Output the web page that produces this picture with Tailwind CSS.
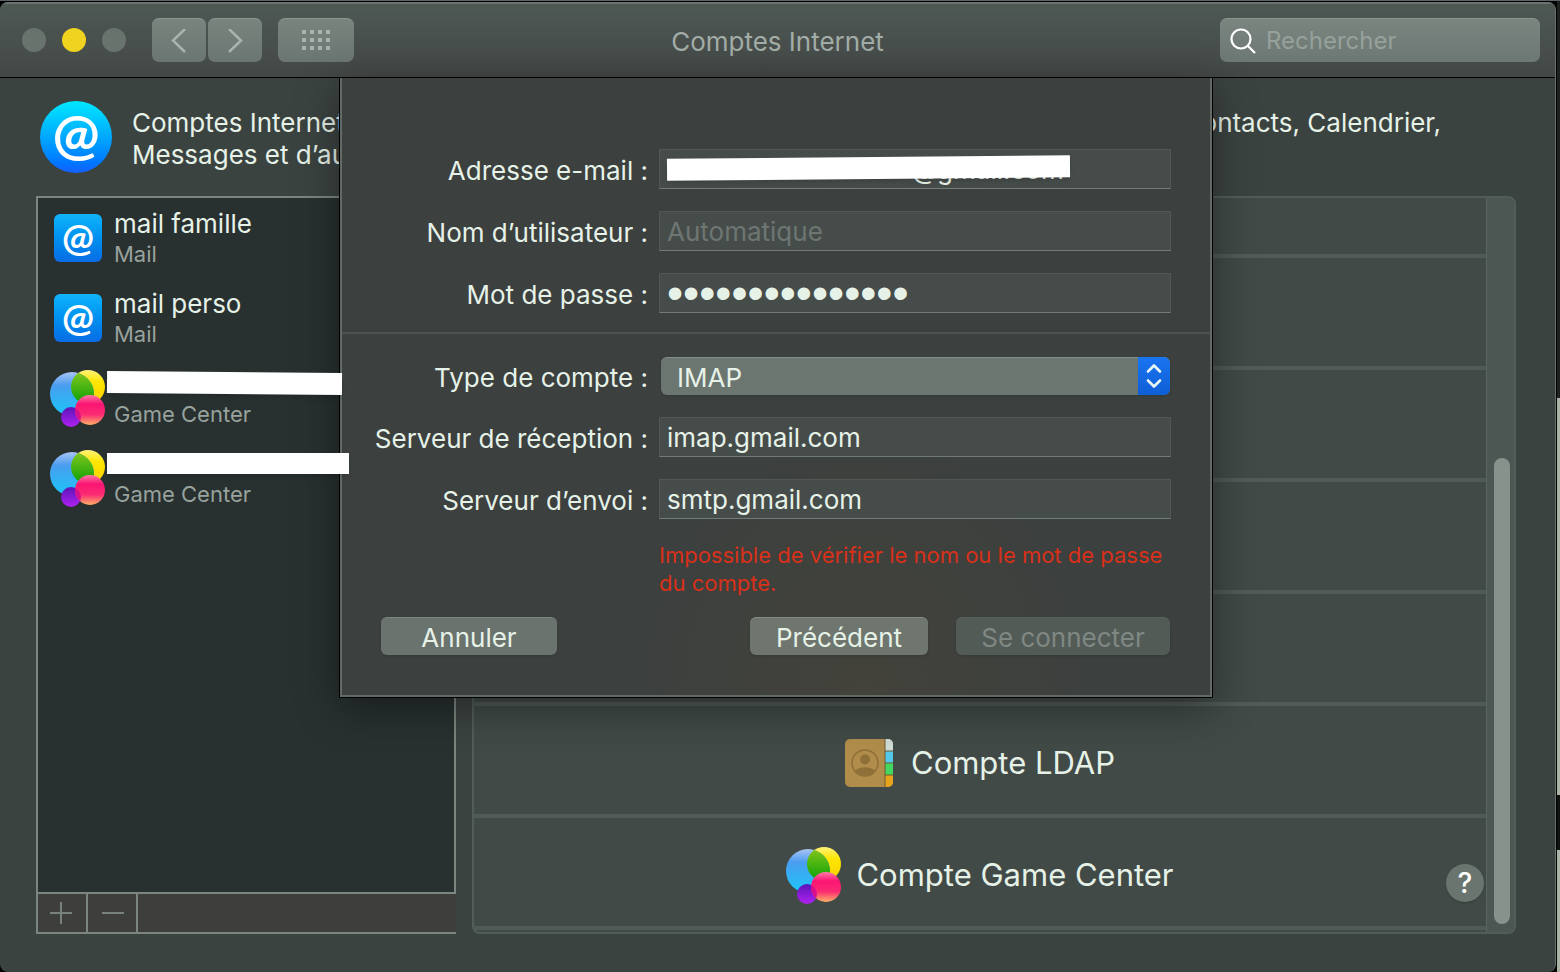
<!DOCTYPE html>
<html lang="fr">
<head>
  <meta charset="UTF-8" />
  <meta name="viewport" content="width=device-width, initial-scale=1" />
  <title>Comptes Internet</title>
  <script src="https://cdn.jsdelivr.net/npm/@tailwindcss/browser@4"></script>
</head>
<body class="bg-black font-['Inter','Liberation_Sans',sans-serif] text-[26px] text-[#e6f2e8]">

  <!-- Shared icons -->
  <svg class="absolute size-0" aria-hidden="true">
    <defs>
      <linearGradient id="gc-blue" x1="0" y1="0" x2="0" y2="1">
        <stop offset="0" stop-color="#a9c4f5" />
        <stop offset=".3" stop-color="#4a9df0" />
        <stop offset="1" stop-color="#19c8f8" />
      </linearGradient>
      <linearGradient id="gc-yellow" x1="0" y1="0" x2="0" y2="1">
        <stop offset="0" stop-color="#fff27a" />
        <stop offset=".35" stop-color="#ffe600" />
        <stop offset="1" stop-color="#f8d000" />
      </linearGradient>
      <linearGradient id="gc-green" x1="0" y1="0" x2="0" y2="1">
        <stop offset="0" stop-color="#8bc81c" />
        <stop offset="1" stop-color="#08a005" />
      </linearGradient>
      <linearGradient id="gc-pink" x1="0" y1="0" x2="0" y2="1">
        <stop offset="0" stop-color="#ff7ba6" />
        <stop offset=".3" stop-color="#fb1573" />
        <stop offset=".65" stop-color="#fb2a72" />
        <stop offset="1" stop-color="#ffb267" />
      </linearGradient>
      <linearGradient id="gc-purple" x1="0" y1="0" x2="0" y2="1">
        <stop offset="0" stop-color="#5a14b8" />
        <stop offset="1" stop-color="#b022f0" />
      </linearGradient>
      <clipPath id="gc-clip"><circle cx="22" cy="24" r="22" /></clipPath>
      <clipPath id="gc-clip-pink"><circle cx="40" cy="40" r="15" /></clipPath>
      <symbol id="game-center" viewBox="0 -1 56 58">
        <circle cx="38" cy="17" r="17" fill="url(#gc-yellow)" />
        <circle cx="22" cy="24" r="22" fill="url(#gc-blue)" />
        <circle cx="38" cy="17" r="17" fill="url(#gc-green)" clip-path="url(#gc-clip)" />
        <circle cx="21" cy="47" r="10" fill="url(#gc-purple)" />
        <circle cx="40" cy="40" r="15" fill="url(#gc-pink)" />
        <circle cx="21" cy="47" r="10" fill="#d8108c" clip-path="url(#gc-clip-pink)" />
      </symbol>
    </defs>
  </svg>

  <div class="flex min-h-screen border-t border-[#5a6468]">

    <!-- Window -->
    <div class="mt-px flex flex-1 flex-col overflow-hidden rounded-t-[8px] rounded-b-[8px] border-r border-[#66706c] bg-[#3b4341]">

      <!-- Toolbar -->
      <header class="grid grid-cols-[1fr_auto_1fr] items-center border-t-2 border-b border-t-[#69736f] border-b-black bg-linear-to-b from-[#4e5854] to-[#434846] px-[15px] pt-[14px] pb-[15px]">
        <div class="flex items-center pl-[7px]">
          <div class="flex gap-4">
            <button aria-label="Fermer" class="size-6 rounded-full bg-[#69736e]"></button>
            <button aria-label="Réduire" class="size-6 rounded-full bg-[#efd320]"></button>
            <button aria-label="Agrandir" class="size-6 rounded-full bg-[#69736e]"></button>
          </div>
          <div class="ml-[26px] flex gap-[2px]">
            <button aria-label="Précédent" class="flex h-11 w-[54px] items-center justify-center rounded-[7px] border-t border-[#8a9590] bg-linear-to-b from-[#79847f] to-[#6b7571]">
              <svg class="h-6 w-4" viewBox="0 0 16 24" fill="none" stroke="#a9b3ae" stroke-width="2.5"><path d="M14 0L2 11.500L14 23" /></svg>
            </button>
            <button aria-label="Suivant" class="flex h-11 w-[54px] items-center justify-center rounded-[7px] border-t border-[#8a9590] bg-linear-to-b from-[#79847f] to-[#6b7571]">
              <svg class="h-6 w-4" viewBox="0 0 16 24" fill="none" stroke="#a9b3ae" stroke-width="2.5"><path d="M2 0L14 11.500L2 23" /></svg>
            </button>
          </div>
          <button aria-label="Tout afficher" class="ml-4 flex h-11 w-[76px] items-center justify-center rounded-[7px] border-t border-[#8a9590] bg-linear-to-b from-[#79847f] to-[#6b7571]">
            <svg class="h-[22px] w-[30px]" viewBox="0 0 30 22" fill="#a9b3ae">
              <path d="M1 0h4v4h-4zM9 0h4v4h-4zM17 0h4v4h-4zM25 0h4v4h-4zM1 8h4v4h-4zM9 8h4v4h-4zM17 8h4v4h-4zM25 8h4v4h-4zM1 16h4v4h-4zM9 16h4v4h-4zM17 16h4v4h-4zM25 16h4v4h-4z" />
            </svg>
          </button>
        </div>
        <h1 class="pt-[2px] text-[#a3ada7]">Comptes Internet</h1>
        <div class="flex h-11 w-80 items-center gap-[10px] justify-self-end rounded-[7px] border-t border-[#8a9590] bg-linear-to-b from-[#7a8580] to-[#6d7773] pl-[10px]">
          <svg class="size-[26px]" viewBox="0 0 26 26" fill="none" stroke="#fff" stroke-width="2.200"><circle cx="11" cy="11" r="9.500" /><path d="M17.500 17.500L25 25" /></svg>
          <input type="search" aria-label="Rechercher" placeholder="Rechercher" class="w-64 bg-transparent text-[24px] outline-none placeholder:text-[#97a19b]" />
        </div>
      </header>

      <main class="relative flex flex-1 flex-col pt-[23px] pr-[39px] pb-[38px] pl-9">

        <!-- Intro -->
        <div class="flex gap-5 pl-1">
          <div class="flex size-[72px] items-center justify-center rounded-full bg-linear-to-b from-[#00e8ff] to-[#1560ff]">
            <span class="pb-2 font-['Lato'] text-[56px] leading-none font-bold text-white">@</span>
          </div>
          <div class="flex-1 pt-[6px] pr-[75px] leading-8">
            <p class="flex justify-between"><span>Comptes Internet</span><span>Contacts, Calendrier,</span></p>
            <p>Messages et d’autres</p>
          </div>
        </div>

        <div class="mt-[23px] flex flex-1 gap-4">

          <!-- Accounts list -->
          <section class="flex w-[420px] flex-col">
            <ul class="flex-1 border-2 border-[#7b8680] bg-[#283030]">
              <li class="flex h-20 items-center gap-2 pl-3">
                <div class="flex w-14 justify-center">
                  <div class="flex size-12 items-center justify-center rounded-[6px] bg-linear-to-b from-[#10b4fb] to-[#0a6ce4]">
                    <span class="pb-[5px] font-['Lato'] text-[38px] leading-none font-bold text-white">@</span>
                  </div>
                </div>
                <div>
                  <p class="leading-8">mail famille</p>
                  <p class="text-[22px] leading-7 text-[#98a29c]">Mail</p>
                </div>
              </li>
              <li class="flex h-20 items-center gap-2 pl-3">
                <div class="flex w-14 justify-center">
                  <div class="flex size-12 items-center justify-center rounded-[6px] bg-linear-to-b from-[#10b4fb] to-[#0a6ce4]">
                    <span class="pb-[5px] font-['Lato'] text-[38px] leading-none font-bold text-white">@</span>
                  </div>
                </div>
                <div>
                  <p class="leading-8">mail perso</p>
                  <p class="text-[22px] leading-7 text-[#98a29c]">Mail</p>
                </div>
              </li>
              <li class="relative flex h-20 items-center gap-2 pl-3">
                <svg class="h-[58px] w-14"><use href="#game-center" /></svg>
                <p class="pt-8 text-[22px] leading-7 text-[#98a29c]">Game Center</p>
                <div class="absolute top-[14px] left-[69px] z-20 h-[22px] w-[235px] rotate-[0.500deg] bg-white shadow-md"></div>
              </li>
              <li class="relative flex h-20 items-center gap-2 pl-3">
                <svg class="h-[58px] w-14"><use href="#game-center" /></svg>
                <p class="pt-8 text-[22px] leading-7 text-[#98a29c]">Game Center</p>
                <div class="absolute top-[15px] left-[69px] z-20 h-[21px] w-[242px] bg-white shadow-md"></div>
              </li>
            </ul>
            <div class="flex h-10 border-b-2 border-l-2 border-[#7b8680] bg-[#3e3f3c]">
              <button aria-label="Ajouter" class="flex w-[50px] items-center justify-center border-r-2 border-[#7b8680]">
                <svg class="size-6" viewBox="0 0 24 24" stroke="#78827c" stroke-width="2"><path d="M0 12h22M11 1v22" /></svg>
              </button>
              <button aria-label="Supprimer" class="flex w-[50px] items-center justify-center border-r-2 border-[#7b8680]">
                <svg class="size-6" viewBox="0 0 24 24" stroke="#78827c" stroke-width="2"><path d="M2 12h22" /></svg>
              </button>
            </div>
          </section>

          <!-- Providers -->
          <section class="relative flex flex-1 overflow-hidden rounded-[8px] border-2 border-[#525d59] bg-[#414a47]">
            <ul class="flex-1 text-[31px]">
              <li class="h-[60px] border-b-4 border-[#505a57]"></li>
              <li class="h-28 border-b-4 border-[#505a57]"></li>
              <li class="h-28 border-b-4 border-[#505a57]"></li>
              <li class="h-28 border-b-4 border-[#505a57]"></li>
              <li class="h-28 border-b-4 border-[#505a57]"></li>
              <li class="flex h-28 items-center justify-center gap-[18px] border-b-4 border-[#505a57] pt-[6px]">
                <svg class="size-12" viewBox="0 0 48 48">
                  <defs><clipPath id="book"><rect width="48" height="48" rx="5" /></clipPath></defs>
                  <g clip-path="url(#book)">
                    <rect width="48" height="48" fill="#b18d4c" />
                    <rect x="40" width="8" height="12" fill="#cfdcd6" />
                    <rect x="40" y="12" width="8" height="12" fill="#54c8e8" />
                    <rect x="40" y="24" width="8" height="12" fill="#45d860" />
                    <rect x="40" y="36" width="8" height="12" fill="#e6a31c" />
                    <path d="M40 0v48M40 12h8M40 24h8M40 36h8" stroke="#6c5a30" stroke-width="1" />
                  </g>
                  <circle cx="20" cy="24" r="13" fill="none" stroke="#8f7038" stroke-width="1.500" />
                  <circle cx="20" cy="20.500" r="5" fill="#8f7038" />
                  <path d="M10 32c4-5 16-5 20 0c-4 6-16 6-20 0z" fill="#8f7038" />
                </svg>
                Compte LDAP
              </li>
              <li class="flex h-28 items-center justify-center gap-[14px] border-b-4 border-[#505a57] pt-[6px]">
                <svg class="h-[58px] w-14"><use href="#game-center" /></svg>
                Compte Game Center
              </li>
            </ul>
            <div class="w-7 border-l border-[#5a6561] bg-[#4c5653] px-[7px] pt-[260px] pb-2">
              <div class="h-full w-4 rounded-full bg-[#87928c]"></div>
            </div>
            <button aria-label="Aide" class="absolute right-[30px] bottom-[30px] size-[38px] rounded-full bg-[#6b756f] text-[28px] leading-none font-medium text-white shadow">?</button>
          </section>
        </div>

        <!-- Sheet -->
        <div class="absolute inset-x-0 top-0 flex justify-center pr-[3px]">
          <form class="w-[874px] border border-t-0 border-black bg-[#3c403e] bg-[radial-gradient(ellipse_at_60%_100%,#43423b_0%,#3c403e_30%)] shadow-[0_10px_40px_rgba(0,0,0,0.4)]">
            <div class="border-2 border-t-0 border-[#616a65]">
              <div class="flex flex-col gap-[22px] pt-[71px] pr-[39px] pb-[19px]">
                <div class="relative flex items-center gap-[11px]">
                  <label for="email" class="flex-1 pt-[3px] text-right leading-8">Adresse e-mail :</label>
                  <input id="email" type="text" value="@gmail.com" class="h-10 w-[512px] border border-[#4f5855] border-b-[#727c77] bg-[#464c4a] pl-[252px] outline-none" />
                  <div class="absolute top-[8px] right-[101px] h-[22px] w-[403px] rotate-[-0.500deg] bg-white shadow-md"></div>
                </div>
                <div class="flex items-center gap-[11px]">
                  <label for="user" class="flex-1 pt-[3px] text-right leading-8">Nom d’utilisateur :</label>
                  <input id="user" type="text" placeholder="Automatique" class="h-10 w-[512px] border border-[#4f5855] border-b-[#727c77] bg-[#464c4a] px-[7px] outline-none placeholder:text-[#6e7672]" />
                </div>
                <div class="flex items-center gap-[11px]">
                  <label for="password" class="flex-1 pt-[3px] text-right leading-8">Mot de passe :</label>
                  <input id="password" type="password" value="000000000000000" class="h-10 w-[512px] border border-[#4f5855] border-b-[#727c77] bg-[#464c4a] px-[7px] font-['Liberation_Sans'] text-[46px] leading-none outline-none" />
                </div>
              </div>
              <hr class="border-t-2 border-[#4c5451]" />
              <div class="flex flex-col gap-[22px] pt-[23px] pr-[39px]">
                <div class="flex items-center gap-[13px]">
                  <label for="type" class="flex-1 pt-[3px] text-right leading-8">Type de compte :</label>
                  <div class="relative mr-px w-[509px]">
                    <select id="type" class="block h-[38px] w-full appearance-none rounded-[6px] border-t border-[#848e88] bg-[#6c7670] pl-4 shadow outline-none">
                      <option>IMAP</option>
                    </select>
                    <span class="pointer-events-none absolute inset-y-0 right-0 flex w-8 items-center justify-center rounded-r-[6px] bg-linear-to-b from-[#1a74f0] to-[#0f5fd6]">
                      <svg class="h-[26px] w-4" viewBox="0 0 16 26" fill="none" stroke="#e6f6f5" stroke-width="2.600" stroke-linecap="round" stroke-linejoin="round"><path d="M2 8.500L8 2.500L14 8.500M2 17.500L8 23.500L14 17.500" /></svg>
                    </span>
                  </div>
                </div>
                <div class="flex items-center gap-[11px]">
                  <label for="incoming" class="flex-1 pt-[3px] text-right leading-8">Serveur de réception :</label>
                  <input id="incoming" type="text" value="imap.gmail.com" class="h-10 w-[512px] border border-[#4f5855] border-b-[#727c77] bg-[#464c4a] px-[7px] outline-none" />
                </div>
                <div class="flex items-center gap-[11px]">
                  <label for="outgoing" class="flex-1 pt-[3px] text-right leading-8">Serveur d’envoi :</label>
                  <input id="outgoing" type="text" value="smtp.gmail.com" class="h-10 w-[512px] border border-[#4f5855] border-b-[#727c77] bg-[#464c4a] px-[7px] outline-none" />
                </div>
                <p class="w-[512px] self-end text-[22px] leading-7 text-[#d9301a]">Impossible de vérifier le nom ou le mot de passe du compte.</p>
              </div>
              <div class="flex pt-5 pr-10 pb-10 pl-[39px]">
                <button type="button" class="h-[38px] w-44 rounded-[6px] border-t border-[#7d8781] bg-[#6a736e] shadow">Annuler</button>
                <button type="button" class="ml-auto h-[38px] w-[178px] rounded-[6px] border-t border-[#828b84] bg-[#6e766e] shadow">Précédent</button>
                <button type="submit" disabled class="ml-7 h-[38px] w-[214px] rounded-[6px] border-t border-[#5a625e] bg-[#535b57] text-[#7f8883] shadow">Se connecter</button>
              </div>
            </div>
          </form>
        </div>
      </main>
    </div>

    <!-- Desktop behind the window -->
    <div class="flex w-1 flex-col border-l border-black">
      <div class="grow-[397] bg-[#1c211f]"></div>
      <div class="grow-[398] bg-[#a9b3a6]"></div>
      <div class="grow-[55] bg-[#10120f]"></div>
      <div class="grow-[122] bg-[#a9b3a6]"></div>
    </div>
  </div>

</body>
</html>
